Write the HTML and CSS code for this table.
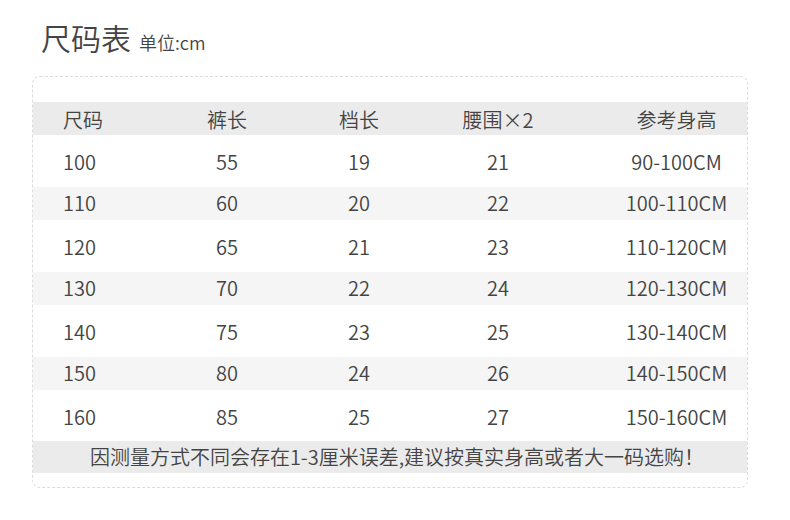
FILE: index.html
```html
<!DOCTYPE html>
<html lang="zh-CN">
<head>
<meta charset="utf-8">
<title>尺码表</title>
<link rel="stylesheet" href="styles.css">
</head>
<body>
<div class="page">
  <h1 class="title">尺码表<span class="unit">单位:cm</span></h1>
  <div class="card">
    <div class="row head">
      <div class="c1">尺码</div><div class="c2">裤长</div><div class="c3">档长</div><div class="c4">腰围×2</div><div class="c5">参考身高</div>
    </div>
    <div class="row odd">
      <div class="c1">100</div><div class="c2">55</div><div class="c3">19</div><div class="c4">21</div><div class="c5">90-100CM</div>
    </div>
    <div class="row even">
      <div class="c1">110</div><div class="c2">60</div><div class="c3">20</div><div class="c4">22</div><div class="c5">100-110CM</div>
    </div>
    <div class="row odd">
      <div class="c1">120</div><div class="c2">65</div><div class="c3">21</div><div class="c4">23</div><div class="c5">110-120CM</div>
    </div>
    <div class="row even">
      <div class="c1">130</div><div class="c2">70</div><div class="c3">22</div><div class="c4">24</div><div class="c5">120-130CM</div>
    </div>
    <div class="row odd">
      <div class="c1">140</div><div class="c2">75</div><div class="c3">23</div><div class="c4">25</div><div class="c5">130-140CM</div>
    </div>
    <div class="row even">
      <div class="c1">150</div><div class="c2">80</div><div class="c3">24</div><div class="c4">26</div><div class="c5">140-150CM</div>
    </div>
    <div class="row odd last">
      <div class="c1">160</div><div class="c2">85</div><div class="c3">25</div><div class="c4">27</div><div class="c5">150-160CM</div>
    </div>
    <div class="note">因测量方式不同会存在1-3厘米误差,建议按真实身高或者大一码选购！</div>
  </div>
</div>
</body>
</html>
```

FILE: styles.css
```css
html, body {
  margin: 0;
  padding: 0;
  background: #ffffff;
}
body {
  font-family: "Noto Sans CJK SC", "Noto Sans", sans-serif;
  font-weight: 350;
  color: #444444;
}
.page {
  padding: 17px 0 0 32px;
}
.title {
  margin: 0 0 19px 9px;
  height: 40px;
  font-size: 30px;
  line-height: 40px;
  font-weight: 350;
  color: #444444;
}
.unit {
  font-size: 18px;
  line-height: 18px;
  margin-left: 8px;
}
.card {
  width: 714px;
  border: 1px dashed #dcdcdc;
  border-radius: 8px;
  padding: 25px 0 14px 0;
}
.row {
  display: grid;
  grid-template-columns: 137px 114px 150px 128px 1fr;
  font-size: 20px;
  line-height: 20px;
  box-sizing: border-box;
}
.row > div {
  text-align: center;
  white-space: nowrap;
}
.row .c1 {
  text-align: left;
  padding-left: 30px;
}
.row .c5 {
  padding-left: 44px;
}
.head {
  background: #ebebeb;
  height: 33px;
  padding-top: 8px;
}
.odd {
  background: #ffffff;
  height: 52px;
  padding-top: 17px;
}
.odd.last {
  height: 51px;
}
.even {
  background: #f5f5f5;
  height: 33px;
  padding-top: 6px;
}
.note {
  background: #ebebeb;
  height: 32px;
  box-sizing: border-box;
  padding: 6px 0 0 14px;
  font-size: 20px;
  line-height: 20px;
  text-align: center;
  white-space: nowrap;
}
```
